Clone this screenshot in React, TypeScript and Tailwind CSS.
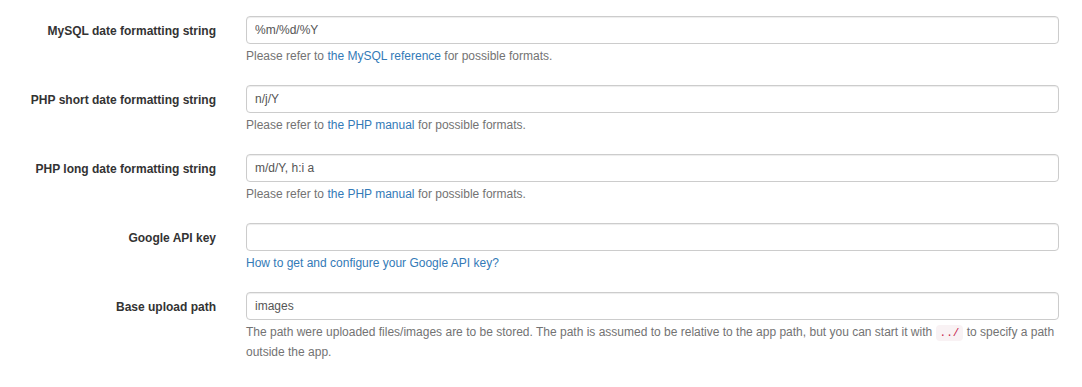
import React from 'react';

type Field = {
    label: string;
    value: string;
    help: React.ReactNode;
};

const A: React.FC<{ children: React.ReactNode }> = ({ children }) => (
    <a href="#" className="text-[#337ab7] no-underline">{children}</a>
);

const fields: Field[] = [
    {
        label: 'MySQL date formatting string',
        value: '%m/%d/%Y',
        help: <span>Please refer to <A>the MySQL reference</A> for possible formats.</span>,
    },
    {
        label: 'PHP short date formatting string',
        value: 'n/j/Y',
        help: <span>Please refer to <A>the PHP manual</A> for possible formats.</span>,
    },
    {
        label: 'PHP long date formatting string',
        value: 'm/d/Y, h:i a',
        help: <span>Please refer to <A>the PHP manual</A> for possible formats.</span>,
    },
    {
        label: 'Google API key',
        value: '',
        help: <A>How to get and configure your Google API key?</A>,
    },
    {
        label: 'Base upload path',
        value: 'images',
        help: (
            <span>
                The path were uploaded files/images are to be stored. The path is assumed to be relative to the app path, but you can start it with{' '}
                <code className="font-['Liberation_Mono',monospace] text-[11px] text-[#c7254e] bg-[#f9f2f4] rounded px-[4px] py-[2px]">../</code>{' '}
                to specify a path outside the app.
            </span>
        ),
    },
];

const Row: React.FC<{ field: Field }> = ({ field }) => {
    return (
        <div className="flex mb-[19px]">
            <label className="w-[216px] shrink-0 text-right font-bold text-[12px] text-[#333] pt-[7px] leading-[17px]">
                {field.label}
            </label>
            <div className="flex-1 ml-[30px]">
                <input
                    type="text"
                    defaultValue={field.value}
                    className="block w-full h-[28px] px-[8px] text-[12px] text-[#555] bg-white border border-[#ccc] rounded-[4px] shadow-[inset_0_1px_1px_rgba(0,0,0,0.075)] outline-none"
                />
                <div className="mt-[3px] text-[12px] leading-[19px] text-[#737373]">
                    {field.help}
                </div>
            </div>
        </div>
    );
};

export default function App() {
    return (
        <div className="w-[1082px] h-[387px] bg-white pt-[16px] pr-[23px] overflow-hidden font-['Liberation_Sans',Arial,sans-serif]">
            {fields.map((f) => (
                <Row key={f.label} field={f} />
            ))}
        </div>
    );
}
